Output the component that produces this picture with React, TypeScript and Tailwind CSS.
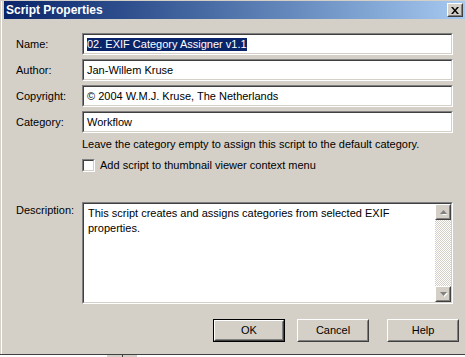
import React from "react";

function Sunken({ className = "", children }: { className?: string; children?: React.ReactNode }) {
  return (
    <div className={`border border-t-[#808080] border-l-[#808080] border-b-white border-r-white ${className}`}>
      <div className="h-full border border-t-[#404040] border-l-[#404040] border-b-[#d4d0c8] border-r-[#d4d0c8] bg-white">
        {children}
      </div>
    </div>
  );
}

function Raised({ className = "", children }: { className?: string; children?: React.ReactNode }) {
  return (
    <div className={`border border-t-white border-l-white border-b-[#404040] border-r-[#404040] bg-[#d4d0c8] ${className}`}>
      <div className="h-full w-full border border-t-[#d4d0c8] border-l-[#d4d0c8] border-b-[#808080] border-r-[#808080] flex items-center justify-center">
        {children}
      </div>
    </div>
  );
}

function Field({ label, children }: { label: string; children?: React.ReactNode }) {
  return (
    <div className="flex items-center h-[22px]">
      <div className="w-[66px] leading-[13px]">{label}</div>
      <Sunken className="w-[371px] h-[22px]">
        <div className="h-full flex items-center pl-[3px] leading-[13px] whitespace-nowrap">{children}</div>
      </Sunken>
    </div>
  );
}

function Arrow({ up }: { up: boolean }) {
  return (
    <svg width="9" height="6" viewBox="0 0 9 6">
      {up ? (
        <>
          <polygon points="2,5 7,5 4.5,2" fill="#ffffff" transform="translate(1,1)" />
          <polygon points="1,5 8,5 4.5,1" fill="#808080" />
        </>
      ) : (
        <>
          <polygon points="1,1 8,1 4.5,5" fill="#ffffff" transform="translate(1,1)" />
          <polygon points="1,1 8,1 4.5,5" fill="#808080" />
        </>
      )}
    </svg>
  );
}

export default function App() {
  return (
    <div className="w-[465px] h-[357px] bg-white overflow-hidden text-[11px] text-black font-['Liberation_Sans',Arial,sans-serif]">
      <div className="h-[355px] bg-[#d4d0c8] pt-[1px] pl-[1px] border-b border-[#404040] flex flex-col">
        <div className="flex-1 border-l border-white pl-[1px] flex flex-col">
          {/* Title bar */}
          <div className="ml-[1px] h-[18px] bg-gradient-to-r from-[#0a246a] to-[#a6caf0] flex items-center justify-between pl-[2px] pr-[2px]">
            <span className="text-white font-bold text-[12px] leading-[14px]">Script Properties</span>
            <Raised className="w-[16px] h-[14px]">
              <svg width="8" height="7" viewBox="0 0 8 7">
                <path d="M0 0h2l2 2.5L6 0h2L5 3.5 8 7H6L4 4.5 2 7H0l3-3.5z" fill="#000" />
              </svg>
            </Raised>
          </div>

          {/* Form */}
          <div className="pl-[13px] pt-[14px] flex flex-col">
            <div className="flex flex-col gap-[4px]">
              <Field label="Name:">
                <span className="bg-[#0a246a] text-white">02. EXIF Category Assigner v1.1</span>
              </Field>
              <Field label="Author:">Jan-Willem Kruse</Field>
              <Field label="Copyright:">© 2004 W.M.J. Kruse, The Netherlands</Field>
              <Field label="Category:">Workflow</Field>
            </div>

            <div className="ml-[66px] mt-[5px] leading-[13px] whitespace-nowrap">
              Leave the category empty to assign this script to the default category.
            </div>

            <div className="ml-[66px] mt-[8px] flex items-center h-[13px]">
              <Sunken className="w-[13px] h-[13px]" />
              <span className="ml-[5px] leading-[13px]">Add script to thumbnail viewer context menu</span>
            </div>

            <div className="mt-[30px] flex items-start">
              <div className="w-[66px] pt-[2px] leading-[13px]">Description:</div>
              <Sunken className="w-[371px] h-[102px]">
                <div className="h-full flex">
                  <div className="flex-1 pl-[4px] pt-[2px] leading-[15px]">
                    This script creates and assigns categories from selected EXIF
                    <br />
                    properties.
                  </div>
                  <div className="w-[16px] flex flex-col">
                    <Raised className="w-[16px] h-[16px]">
                      <Arrow up />
                    </Raised>
                    <div className="flex-1 bg-[repeating-conic-gradient(#d4d0c8_0%_25%,#ffffff_0%_50%)] bg-[length:2px_2px]" />
                    <Raised className="w-[16px] h-[16px]">
                      <Arrow up={false} />
                    </Raised>
                  </div>
                </div>
              </Sunken>
            </div>
          </div>

          {/* Buttons */}
          <div className="mt-[15px] flex justify-end pr-[6px]">
            <div className="border border-black">
              <Raised className="w-[70px] h-[21px]">
                <span className="leading-[13px]">OK</span>
              </Raised>
            </div>
            <Raised className="ml-[12px] w-[72px] h-[23px]">
              <span className="leading-[13px]">Cancel</span>
            </Raised>
            <Raised className="ml-[18px] w-[72px] h-[23px]">
              <span className="leading-[13px]">Help</span>
            </Raised>
          </div>
        </div>
      </div>
      <div className="h-[2px] flex pl-[107px]">
        <div className="w-[15px] h-[2px] bg-[#d4d0c8]" />
        <div className="w-[1px] h-[2px] bg-[#404040]" />
        <div className="w-[14px] h-[2px] bg-[#d4d0c8]" />
      </div>
    </div>
  );
}
